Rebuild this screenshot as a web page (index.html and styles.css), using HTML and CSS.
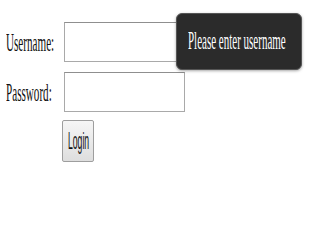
FILE: index.html
```html
<!DOCTYPE html>
<html>
<head>
<meta charset="utf-8">
<link rel="stylesheet" href="styles.css">
</head>
<body>
<form class="login">
  <label class="lbl"><span class="sq">Username:</span></label>
  <input class="field" type="text">
  <label class="lbl"><span class="sq">Password:</span></label>
  <input class="field" type="password">
  <div class="btn-cell"><button class="btn" type="button"><span class="sq-btn">Login</span></button></div>
</form>
<div class="tip"><span class="sq">Please enter username</span></div>
</body>
</html>
```
FILE: styles.css
```css
html, body {
  margin: 0;
  padding: 0;
  background: #fff;
  width: 320px;
  height: 250px;
  overflow: hidden;
  position: relative;
  font-family: "Liberation Serif", "Times New Roman", serif;
}
.login {
  display: grid;
  grid-template-columns: 58px 121px;
  grid-auto-rows: 40px;
  row-gap: 10px;
  padding: 22px 0 0 6px;
  margin: 0;
}
.lbl {
  display: flex;
  align-items: center;
  padding-top: 2px;
  font-size: 25px;
  color: #111;
  white-space: nowrap;
}
.sq {
  display: inline-block;
  transform: scaleX(0.445);
  transform-origin: 0 50%;
  white-space: nowrap;
}
.field {
  box-sizing: border-box;
  width: 121px;
  height: 40px;
  margin: 0;
  border: 1px solid #a9a9a9;
  border-top-color: #8f8f8f;
  background: #fff;
  padding: 0;
}
.btn-cell {
  grid-column: 2;
  margin: -2px 0 0 -2px;
}
.btn {
  box-sizing: border-box;
  width: 32px;
  height: 42px;
  margin: 0;
  padding: 0 0 0 5px;
  border: 1px solid #9e9e9e;
  border-radius: 2px;
  background: linear-gradient(#f6f6f6, #dedede);
  text-align: left;
  font-family: "Liberation Sans", Arial, sans-serif;
  font-size: 24px;
  color: #111;
  overflow: visible;
}
.sq-btn {
  display: inline-block;
  transform: scaleX(0.36);
  transform-origin: 0 50%;
  white-space: nowrap;
}
.tip {
  position: absolute;
  left: 176px;
  top: 13px;
  width: 126px;
  height: 57px;
  box-sizing: border-box;
  padding: 0 0 2px 11px;
  display: flex;
  align-items: center;
  background: #2b2b2b;
  border: 1px solid #555;
  border-radius: 6px;
  box-shadow: 0 1px 3px rgba(0,0,0,0.35);
  color: #fff;
  font-size: 25px;
  white-space: nowrap;
}
.tip .sq {
  transform: scaleX(0.44);
}
```
